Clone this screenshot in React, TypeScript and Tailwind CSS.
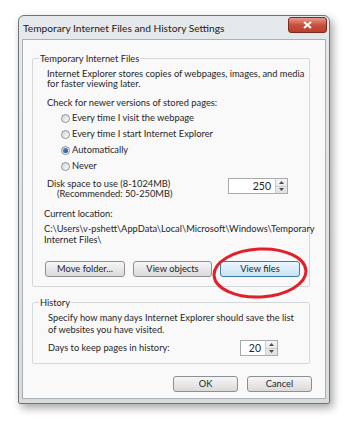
import React from "react";

function Radio({ label, checked }: { label: string; checked?: boolean }) {
  return (
    <div className="h-[16px] flex items-center">
      <span className="w-[9px] h-[9px] rounded-full border border-[#8e9297] bg-gradient-to-br from-[#d4d6d8] to-[#fbfbfb] flex items-center justify-center">
        {checked && <span className="w-[5px] h-[5px] rounded-full bg-gradient-to-br from-[#5d8fd0] to-[#1c4a8c]" />}
      </span>
      <span className="ml-[2px]">{label}</span>
    </div>
  );
}

function Spin({ value, w, numW }: { value: string; w: string; numW: string }) {
  return (
    <div className={`${w} h-[16px] flex border border-[#a7abb0] bg-white`}>
      <div className={`${numW} h-full flex items-center justify-end pr-[4px] text-[10.5px]`}>{value}</div>
      <div className="flex-1 flex flex-col border-l border-[#c9cdd1] bg-gradient-to-b from-[#f4f4f4] to-[#e0e0e0]">
        <div className="flex-1 flex items-center justify-center border-b border-[#c9cdd1]">
          <svg width="5" height="3" viewBox="0 0 5 3"><path d="M0 3 L2.5 0 L5 3 Z" fill="#4d4d4d" /></svg>
        </div>
        <div className="flex-1 flex items-center justify-center">
          <svg width="5" height="3" viewBox="0 0 5 3"><path d="M0 0 L2.5 3 L5 0 Z" fill="#4d4d4d" /></svg>
        </div>
      </div>
    </div>
  );
}

function Btn({ label, w, focus }: { label: string; w: string; focus?: boolean }) {
  return (
    <div
      className={`${w} h-[16px] flex items-center justify-center rounded-[3px] border ${
        focus
          ? "border-[#3d7bad] bg-gradient-to-b from-[#eaf6fd] to-[#c9e3f4]"
          : "border-[#8d9093] bg-gradient-to-b from-[#f6f6f6] to-[#dadada]"
      }`}
    >
      {label}
    </div>
  );
}

export default function App() {
  return (
    <div className="w-[351px] h-[444px] bg-white pt-[15px] pl-[18px] font-['Lato',sans-serif] text-[9.3px] leading-[10px] text-[#262626] whitespace-nowrap">
      <div className="w-[312px] h-[389px] flex flex-col rounded-t-[6px] rounded-b-[2px] border border-[#6f7378] bg-gradient-to-b from-[#e6e9eb] to-[#d9dcdd] shadow-[3px_4px_8px_rgba(0,0,0,0.35)]">
        {/* title bar */}
        <div className="h-[23px] flex items-start justify-between">
          <span className="pl-[4px] pt-[6px] text-[10.2px] leading-[13px] text-[#202020]">
            Temporary Internet Files and History Settings
          </span>
          <div className="mt-[1px] mr-[2px] w-[39px] h-[16px] rounded-[3px] border border-[#7a2a22] bg-gradient-to-b from-[#e59a8c] via-[#c9503e] to-[#b8402c] flex items-center justify-center">
            <svg width="9" height="8" viewBox="0 0 9 8">
              <path d="M1 1 L8 7 M8 1 L1 7" stroke="white" strokeWidth="2" />
            </svg>
          </div>
        </div>

        {/* content */}
        <div className="relative flex-1 mx-[3px] mb-[4px] bg-[#f9f9f9] border border-[#a9b0b6] flex flex-col">
          <fieldset className="ml-[9px] mt-[13px] w-[278px] min-w-0 border border-[#d5d8db] rounded-[2px] pb-[9px]">
            <legend className="ml-[6px] px-[1px] leading-[11px]">Temporary Internet Files</legend>
            <div className="pl-[14px] pt-[5px]">
              <p>Internet Explorer stores copies of webpages, images, and media</p>
              <p>for faster viewing later.</p>
              <p className="mt-[9px]">Check for newer versions of stored pages:</p>
              <div className="mt-[2px] pl-[14px]">
                <Radio label="Every time I visit the webpage" />
                <Radio label="Every time I start Internet Explorer" />
                <Radio label="Automatically" checked />
                <Radio label="Never" />
              </div>
              <div className="mt-[5px] flex">
                <div>
                  <p>Disk space to use (8-1024MB)</p>
                  <p className="pl-[10px]">(Recommended: 50-250MB)</p>
                </div>
                <div className="ml-auto mr-[21px] mt-[-1px]">
                  <Spin value="250" w="w-[60px]" numW="w-[46px]" />
                </div>
              </div>
            </div>
            <div className="pl-[11px]">
              <p className="mt-[10px]">Current location:</p>
              <p className="mt-[4px] leading-[11px]">
                C:\Users\v-pshett\AppData\Local\Microsoft\Windows\Temporary
                <br />
                Internet Files\
              </p>
            </div>
            <div className="mt-[16px] pl-[12px] flex gap-[8px]">
              <Btn label="Move folder..." w="w-[80px]" />
              <Btn label="View objects" w="w-[79px]" />
              <Btn label="View files" w="w-[80px]" focus />
            </div>
          </fieldset>

          <fieldset className="ml-[9px] mt-[10px] w-[278px] min-w-0 border border-[#d5d8db] rounded-[2px] pb-[7px]">
            <legend className="ml-[6px] px-[1px] leading-[11px]">History</legend>
            <div className="pl-[15px]">
              <p className="mt-[4px] leading-[12px]">
                Specify how many days Internet Explorer should save the list
                <br />
                of websites you have visited.
              </p>
              <div className="mt-[4px] h-[16px] flex items-center">
                <span>Days to keep pages in history:</span>
                <div className="ml-auto mr-[31px]">
                  <Spin value="20" w="w-[38px]" numW="w-[24px]" />
                </div>
              </div>
            </div>
          </fieldset>

          <div className="mt-[12px] mr-[13px] flex justify-end gap-[9px]">
            <Btn label="OK" w="w-[65px]" />
            <Btn label="Cancel" w="w-[65px]" />
          </div>

          {/* red highlight circle */}
          <svg className="absolute left-[189px] top-[207px]" width="96" height="52" viewBox="0 0 96 52">
            <ellipse cx="48" cy="26" rx="46" ry="24" fill="none" stroke="#e3202a" strokeWidth="3" transform="rotate(-3 48 26)" />
          </svg>
        </div>
      </div>
    </div>
  );
}
